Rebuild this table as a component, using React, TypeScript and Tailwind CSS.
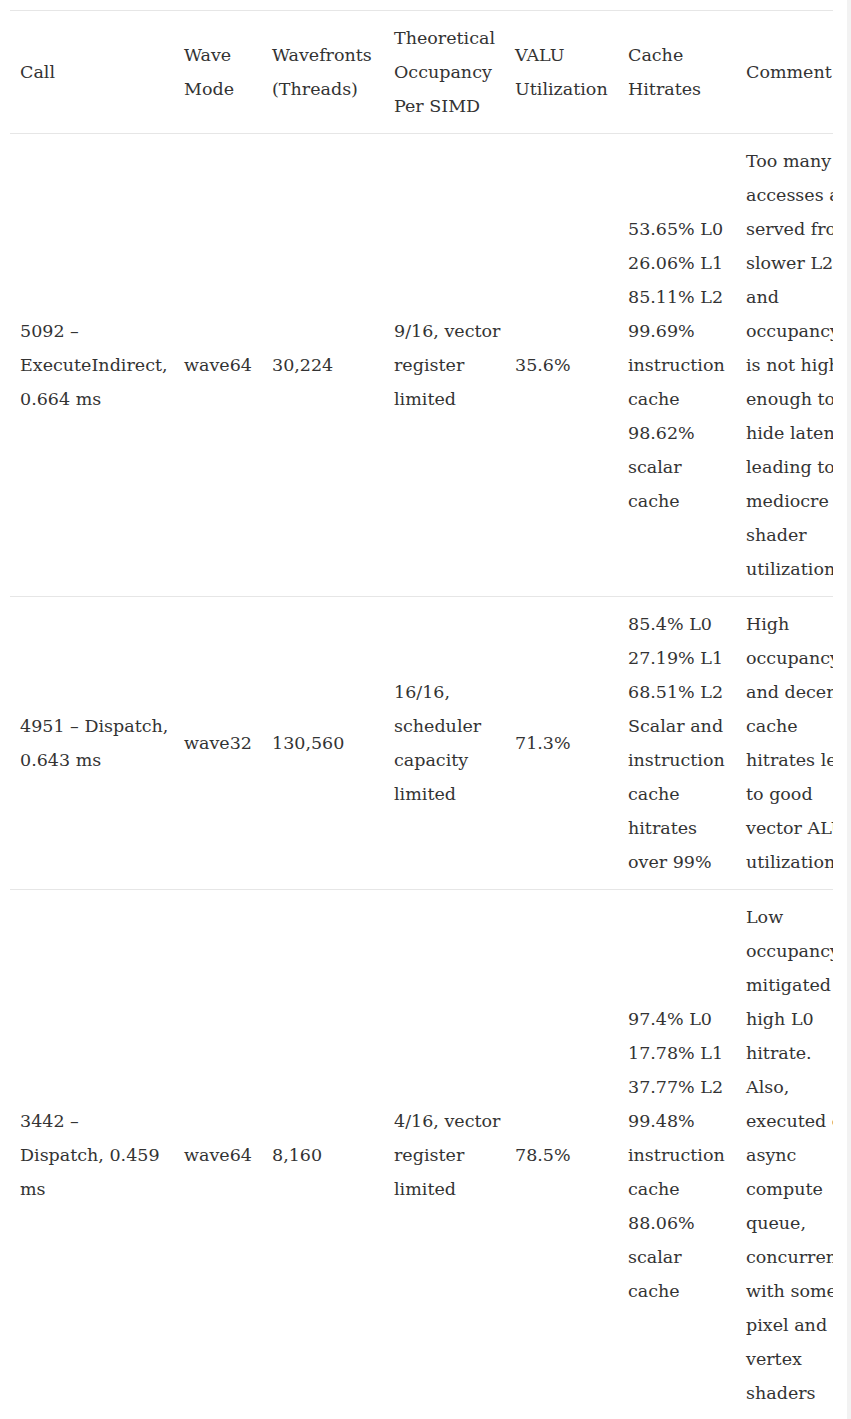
import React from 'react';

type Row = {
  call: string[];
  mode: string;
  waves: string;
  occupancy: string[];
  valu: string;
  cache: string[];
  comment: string[];
};

const rows: Row[] = [
  {
    call: ['5092 –', 'ExecuteIndirect,', '0.664 ms'],
    mode: 'wave64',
    waves: '30,224',
    occupancy: ['9/16, vector', 'register', 'limited'],
    valu: '35.6%',
    cache: ['53.65% L0', '26.06% L1', '85.11% L2', '99.69%', 'instruction', 'cache', '98.62%', 'scalar', 'cache'],
    comment: [
      'Too many',
      'accesses are',
      'served from',
      'slower L2,',
      'and',
      'occupancy',
      'is not high',
      'enough to',
      'hide latency,',
      'leading to',
      'mediocre',
      'shader',
      'utilization',
    ],
  },
  {
    call: ['4951 – Dispatch,', '0.643 ms'],
    mode: 'wave32',
    waves: '130,560',
    occupancy: ['16/16,', 'scheduler', 'capacity', 'limited'],
    valu: '71.3%',
    cache: ['85.4% L0', '27.19% L1', '68.51% L2', 'Scalar and', 'instruction', 'cache', 'hitrates', 'over 99%'],
    comment: ['High', 'occupancy', 'and decent', 'cache', 'hitrates lead', 'to good', 'vector ALU', 'utilization'],
  },
  {
    call: ['3442 –', 'Dispatch, 0.459', 'ms'],
    mode: 'wave64',
    waves: '8,160',
    occupancy: ['4/16, vector', 'register', 'limited'],
    valu: '78.5%',
    cache: ['97.4% L0', '17.78% L1', '37.77% L2', '99.48%', 'instruction', 'cache', '88.06%', 'scalar', 'cache'],
    comment: [
      'Low',
      'occupancy',
      'mitigated by',
      'high L0',
      'hitrate.',
      'Also,',
      'executed on',
      'async',
      'compute',
      'queue,',
      'concurrently',
      'with some',
      'pixel and',
      'vertex',
      'shaders',
    ],
  },
];

const Lines = ({ lines }: { lines: string[] }) => (
  <>
    {lines.map((l, i) => (
      <React.Fragment key={i}>
        {i > 0 && <br />}
        {l}
      </React.Fragment>
    ))}
  </>
);

const cell = 'px-[10px] py-[10px] align-middle text-left font-normal whitespace-nowrap';

export default function App() {
  return (
    <div
      className="flex w-[851px] h-[1419px] bg-white text-[#333333] text-[17.5px] leading-[34px]"
      style={{ fontFamily: '"DejaVu Serif", serif' }}
    >
      <div className="w-[833px] pl-[10px] pt-[10px] overflow-hidden">
        <table className="table-fixed border-collapse w-[900px]">
          <colgroup>
            <col className="w-[164px]" />
            <col className="w-[88px]" />
            <col className="w-[122px]" />
            <col className="w-[121px]" />
            <col className="w-[113px]" />
            <col className="w-[118px]" />
            <col className="w-[174px]" />
          </colgroup>
          <thead>
            <tr className="border-t border-b border-[#e6e6e6]">
              <th className={cell}>Call</th>
              <th className={cell}>
                <Lines lines={['Wave', 'Mode']} />
              </th>
              <th className={cell}>
                <Lines lines={['Wavefronts', '(Threads)']} />
              </th>
              <th className={cell}>
                <Lines lines={['Theoretical', 'Occupancy', 'Per SIMD']} />
              </th>
              <th className={cell}>
                <Lines lines={['VALU', 'Utilization']} />
              </th>
              <th className={cell}>
                <Lines lines={['Cache', 'Hitrates']} />
              </th>
              <th className={cell}>Comment</th>
            </tr>
          </thead>
          <tbody>
            {rows.map((r, i) => (
              <tr key={i} className="border-b border-[#e6e6e6]">
                <td className={cell}>
                  <Lines lines={r.call} />
                </td>
                <td className={cell}>{r.mode}</td>
                <td className={cell}>{r.waves}</td>
                <td className={cell}>
                  <Lines lines={r.occupancy} />
                </td>
                <td className={cell}>{r.valu}</td>
                <td className={cell}>
                  <Lines lines={r.cache} />
                </td>
                <td className={cell}>
                  <Lines lines={r.comment} />
                </td>
              </tr>
            ))}
          </tbody>
        </table>
      </div>
      <div className="w-[14px]" />
      <div className="w-[4px] bg-[#f2f2f2]" />
    </div>
  );
}
